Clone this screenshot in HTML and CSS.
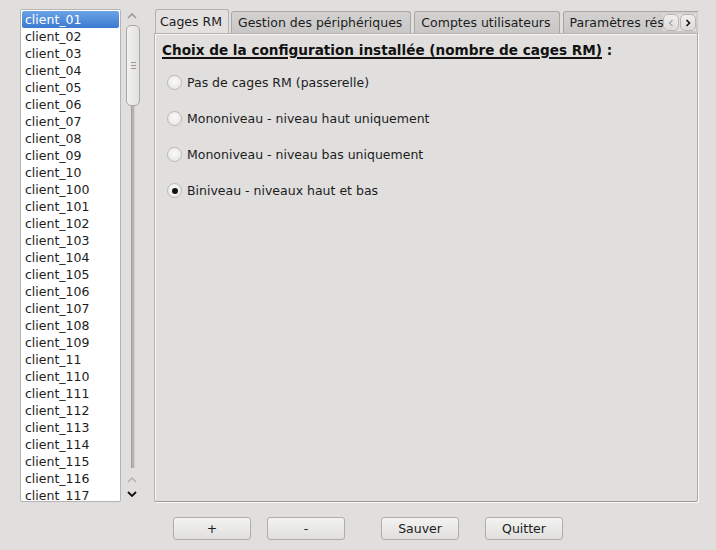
FILE: index.html
```html
<!DOCTYPE html>
<html>
<head>
<meta charset="utf-8">
<link rel="stylesheet" href="styles.css">
</head>
<body>
<div class="window">
  <div class="main">
    <div class="listbox">
      <div class="item selected">client_01</div>
      <div class="item">client_02</div>
      <div class="item">client_03</div>
      <div class="item">client_04</div>
      <div class="item">client_05</div>
      <div class="item">client_06</div>
      <div class="item">client_07</div>
      <div class="item">client_08</div>
      <div class="item">client_09</div>
      <div class="item">client_10</div>
      <div class="item">client_100</div>
      <div class="item">client_101</div>
      <div class="item">client_102</div>
      <div class="item">client_103</div>
      <div class="item">client_104</div>
      <div class="item">client_105</div>
      <div class="item">client_106</div>
      <div class="item">client_107</div>
      <div class="item">client_108</div>
      <div class="item">client_109</div>
      <div class="item">client_11</div>
      <div class="item">client_110</div>
      <div class="item">client_111</div>
      <div class="item">client_112</div>
      <div class="item">client_113</div>
      <div class="item">client_114</div>
      <div class="item">client_115</div>
      <div class="item">client_116</div>
      <div class="item">client_117</div>
    </div>
    <div class="vscroll">
      <svg class="arrow up-top" width="10" height="6" viewBox="0 0 10 6"><path d="M1 5 L5 1 L9 5" fill="none" stroke="#9a9a9a" stroke-width="1.6"/></svg>
      <div class="slider"><div class="grip"><span></span><span></span><span></span></div></div>
      <div class="track"></div>
      <svg class="arrow up-bot" width="10" height="6" viewBox="0 0 10 6"><path d="M1 5 L5 1 L9 5" fill="none" stroke="#b4b4b4" stroke-width="1.6"/></svg>
      <svg class="arrow down" width="10" height="6" viewBox="0 0 10 6"><path d="M1 1 L5 5 L9 1" fill="none" stroke="#111" stroke-width="1.8"/></svg>
    </div>
    <div class="tabwidget">
      <div class="tabbar">
        <div class="tab active">Cages RM</div>
        <div class="tab">Gestion des périphériques</div>
        <div class="tab">Comptes utilisateurs</div>
        <div class="tab last">Paramètres réseau</div>
        <div class="tabscroll">
          <div class="tsbtn"><svg width="6" height="8" viewBox="0 0 6 8"><path d="M4.5 1 L1.5 4 L4.5 7" fill="none" stroke="#aaa" stroke-width="1.4"/></svg></div>
          <div class="tsbtn"><svg width="6" height="8" viewBox="0 0 6 8"><path d="M1.5 1 L4.5 4 L1.5 7" fill="none" stroke="#111" stroke-width="1.6"/></svg></div>
        </div>
      </div>
      <div class="pane">
        <div class="heading"><span class="u">Choix de la configuration installée (nombre de cages RM)</span> :</div>
        <div class="radios">
          <div class="radio"><span class="circle"></span><span>Pas de cages RM (passerelle)</span></div>
          <div class="radio"><span class="circle"></span><span>Mononiveau - niveau haut uniquement</span></div>
          <div class="radio"><span class="circle"></span><span>Mononiveau - niveau bas uniquement</span></div>
          <div class="radio"><span class="circle checked"></span><span>Biniveau - niveaux haut et bas</span></div>
        </div>
      </div>
    </div>
  </div>
  <div class="buttons">
    <button class="btn b1">+</button>
    <button class="btn b2">-</button>
    <button class="btn b3">Sauver</button>
    <button class="btn b4">Quitter</button>
  </div>
</div>
</body>
</html>
```
FILE: styles.css
```css
* { box-sizing: border-box; }
html, body {
  margin: 0;
  padding: 0;
  background: #e0dfde;
  width: 716px;
  height: 550px;
  overflow: hidden;
  font-family: "DejaVu Sans", sans-serif;
  font-size: 12.5px;
  color: #1c1c1c;
}
.window {
  display: flex;
  flex-direction: column;
}
.main {
  display: flex;
  padding: 9px 0 0 20px;
  height: 502px;
}
.listbox {
  width: 101px;
  height: 493px;
  background: #fff;
  border: 1px solid #b5b4b3;
  border-radius: 2px;
  overflow: hidden;
  padding: 1px 1px 0 1px;
}
.item {
  height: 17px;
  line-height: 17px;
  padding-left: 3px;
  white-space: nowrap;
  color: #1c1c1c;
}
.item.selected {
  background: linear-gradient(#6aa3e6, #3a7ad0);
  color: #fff;
  border-radius: 2px;
}
.vscroll {
  position: relative;
  width: 16px;
  height: 493px;
  margin-left: 3px;
}
.arrow { position: absolute; left: 3px; }
.up-top { top: 4px; }
.up-bot { top: 468px; }
.down { top: 482px; }
.slider {
  position: absolute;
  left: 2px;
  top: 16px;
  width: 14px;
  height: 81px;
  border: 1px solid #a9a8a7;
  border-radius: 5px;
  background: linear-gradient(90deg, #f1f1f0, #e2e1e0);
  display: flex;
  align-items: center;
  justify-content: center;
}
.grip { display: flex; flex-direction: column; gap: 2px; }
.grip span { display: block; width: 5px; height: 1px; background: #9b9a99; }
.track {
  position: absolute;
  left: 7px;
  top: 97px;
  width: 4px;
  height: 362px;
  background: #b5b4b3;
  border-left: 1px solid #9f9e9d;
  border-right: 1px solid #cfcecd;
}
.tabwidget {
  margin-left: 14px;
  width: 544px;
  display: flex;
  flex-direction: column;
}
.tabbar {
  position: relative;
  display: flex;
  height: 24px;
  align-items: flex-end;
  overflow: hidden;
  padding-left: 1px;
}
.tab {
  height: 22px;
  line-height: 21px;
  padding: 0 8px 0 6px;
  margin-right: 3px;
  background: linear-gradient(#d3d2d1, #c8c7c6);
  border: 1px solid #a8a7a6;
  border-bottom: none;
  border-radius: 3px 3px 0 0;
  white-space: nowrap;
  color: #1c1c1c;
}
.tab.active {
  line-height: 24px;
  background: #e2e1e0;
  border-color: #b3b2b1;
  padding: 0 6px 0 4px;
  margin-right: 2px;
  position: relative;
  z-index: 2;
  margin-bottom: -1px;
  height: 25px;
}
.tab.last { padding-right: 40px; }
.tabscroll {
  position: absolute;
  right: 2px;
  top: 5px;
  display: flex;
  gap: 1px;
  background: #e0dfde;
  z-index: 3;
}
.tsbtn {
  width: 16px;
  height: 17px;
  border: 1px solid #b8b7b6;
  border-radius: 5px;
  background: linear-gradient(#f0efee, #dcdbda);
  display: flex;
  align-items: center;
  justify-content: center;
}
.pane {
  height: 469px;
  border: 1px solid #b3b2b1;
  box-shadow: inset 1px 1px 0 #f6f6f5, 1px 1px 0 #fbfbfa;
  border-right-color: #a9a8a7;
  border-bottom-color: #9a9998;
  background: #e0dfde;
  padding: 8px 0 0 7px;
  border-radius: 0 0 2px 2px;
}
.heading {
  font-weight: bold;
  font-size: 13.6px;
  line-height: 17px;
  color: #111;
  white-space: nowrap;
}
.heading .u {
  text-decoration: underline;
  text-decoration-thickness: 2px;
  text-underline-offset: 2px;
}
.radios {
  display: flex;
  flex-direction: column;
  gap: 19px;
  margin-top: 15px;
  padding-left: 5px;
}
.radio {
  display: flex;
  align-items: center;
  height: 17px;
  gap: 5px;
  white-space: nowrap;
}
.circle {
  width: 15px;
  height: 15px;
  border-radius: 50%;
  border: 1px solid #b9b8b7;
  background: radial-gradient(circle at 50% 40%, #fafaf9, #e4e3e2);
  display: flex;
  align-items: center;
  justify-content: center;
}
.circle.checked::after {
  content: "";
  width: 6px;
  height: 6px;
  border-radius: 50%;
  background: #111;
}
.buttons {
  display: flex;
  padding: 15px 0 0 173px;
}
.btn {
  width: 78px;
  height: 23px;
  font-family: "DejaVu Sans", sans-serif;
  font-size: 12.5px;
  color: #1c1c1c;
  border: 1px solid #aeadac;
  border-radius: 3px;
  background: linear-gradient(#f3f3f2, #e0dfde);
  padding: 0;
  margin: 0;
}
.b2 { margin-left: 16px; }
.b3 { margin-left: 36px; }
.b4 { margin-left: 26px; }
```
